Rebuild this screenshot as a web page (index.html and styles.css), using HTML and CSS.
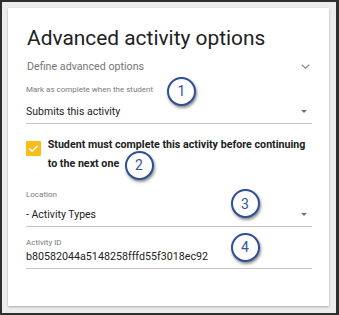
FILE: index.html
```html
<!DOCTYPE html>
<html>
<head>
<meta charset="utf-8">
<link rel="stylesheet" href="styles.css">
</head>
<body>
<div class="frame">
  <div class="card">
    <h1 class="title">Advanced activity options</h1>
    <div class="section-head">
      <span>Define advanced options</span>
      <svg class="chev" width="9" height="5" viewBox="0 0 9 5"><path d="M0.7 0.7 L4.5 4.2 L8.3 0.7" fill="none" stroke="#8a8a8a" stroke-width="1.2"/></svg>
    </div>
    <div class="field f-mark">
      <div class="label">Mark as complete when the student</div>
      <div class="value select"><span>Submits this activity</span><span class="caret"></span></div>
    </div>
    <div class="check-row">
      <span class="checkbox"><svg width="15" height="15" viewBox="0 0 15 15"><path d="M3.3 7.6 L6.1 10.3 L11.7 4.7" fill="none" stroke="#fff" stroke-width="1.5"/></svg></span>
      <span class="check-text">Student must complete this activity before continuing<br>to the next one</span>
    </div>
    <div class="field f-loc">
      <div class="label">Location</div>
      <div class="value select"><span>- Activity Types</span><span class="caret"></span></div>
    </div>
    <div class="field f-id">
      <div class="label">Activity ID</div>
      <div class="value id-value"><span>b80582044a5148258fffd55f3018ec92</span></div>
    </div>
    <span class="badge b1">1</span>
    <span class="badge b2">2</span>
    <span class="badge b3">3</span>
    <span class="badge b4">4</span>
  </div>
</div>
</body>
</html>
```
FILE: styles.css
```css
html, body { margin: 0; padding: 0; }
body { width: 339px; height: 315px; background: #2e2e2e; font-family: Roboto, "Noto Sans", sans-serif; }
.frame {
  box-sizing: border-box;
  width: 339px; height: 315px;
  border-style: solid; border-color: #2e2e2e;
  border-width: 2px 3px 2px 2px;
  background: #ececec;
  padding: 6px 5px 0 6px;
}
.card {
  position: relative;
  box-sizing: border-box;
  width: 321px; height: 298px;
  background: #fff;
  box-shadow: 0 1px 2px rgba(0,0,0,0.28);
  padding: 18px 17px 0 18px;
}
.title {
  margin: 0 0 0 1px;
  font-weight: 400;
  font-size: 20.9px;
  line-height: 24px;
  color: #212121;
}
.section-head {
  margin-top: 10px;
  display: flex; justify-content: space-between; align-items: center;
  font-size: 10.7px; line-height: 14px; color: #757575;
  padding-left: 1px;
  padding-right: 2px;
}
.chev { margin-top: -1px; }
.label { font-size: 8px; color: #7a7a7a; line-height: 10px; }
.value {
  display: flex; justify-content: space-between; align-items: center;
  font-size: 10.5px; line-height: 13px; color: #212121;
  padding-bottom: 5px;
  border-bottom: 1px solid #c4c4c4;
}
.id-value { font-size: 10.7px; }
.caret {
  width: 0; height: 0;
  border-left: 3px solid transparent; border-right: 3px solid transparent;
  border-top: 3px solid #757575;
  margin-right: 5px;
  margin-top: 1px;
}
.f-mark { margin-top: 11px; }
.f-mark .value { margin-top: 9.5px; }
.check-row {
  display: flex; align-items: flex-start;
  margin-top: 11.5px;
}
.checkbox {
  flex: none;
  width: 15px; height: 15px;
  background: #fbbd1a;
  border-radius: 1px;
  margin-top: 5.5px;
  margin-right: 6.7px;
}
.checkbox svg { display: block; }
.check-text {
  font-size: 10.7px; font-weight: 700; color: #212121;
  line-height: 19px;
  white-space: nowrap;
}
.f-loc { margin-top: 17px; }
.f-loc .value { margin-top: 7.5px; }
.f-id { margin-top: 11.3px; }
.f-id .value { margin-top: 2.6px; }
.badge {
  position: absolute;
  box-sizing: border-box;
  width: 29px; height: 29px;
  border-radius: 50%;
  border: 2.5px solid #2f4f96;
  background: #fff;
  color: #34549c;
  font-size: 14px;
  display: flex; align-items: center; justify-content: center;
  box-shadow: 1px 2px 3px rgba(0,0,0,0.45);
}
.b1 { left: 159px; top: 68.5px; }
.b2 { left: 116.5px; top: 142.5px; }
.b3 { left: 222.5px; top: 181px; }
.b4 { left: 222.5px; top: 224.5px; }
```
